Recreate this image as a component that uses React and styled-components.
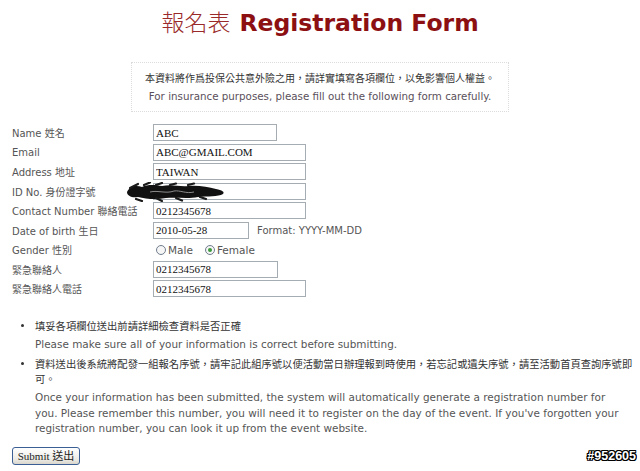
import styled, { createGlobalStyle } from "styled-components";

const GlobalStyle = createGlobalStyle`
    html, body {
        margin: 0;
        padding: 0;
        background: #ffffff;
    }
    body {
        font-family: "DejaVu Sans", Verdana, "Noto Sans CJK TC", sans-serif;
    }
`;

const Page = styled.div`
    position: relative;
    width: 640px;
    height: 471px;
    overflow: hidden;
    background: #fff;
`;

const Title = styled.h1`
    margin: 0;
    padding-top: 4px;
    height: 56px;
    box-sizing: border-box;
    text-align: center;
    font-size: 23.5px;
    line-height: 34px;
    color: #8c0f12;
    white-space: nowrap;
`;

const TitleZh = styled.span`
    font-family: "Noto Sans CJK TC", sans-serif;
    font-weight: 300;
    font-size: 23px;
    color: #9a2a2a;
    margin-right: 9px;
`;

const TitleEn = styled.span`
    font-family: "DejaVu Sans", Verdana, sans-serif;
    font-weight: bold;
`;

const Notice = styled.div`
    width: 378px;
    height: 50px;
    margin: 6px auto 0;
    box-sizing: border-box;
    border: 1px dotted #dcdcdc;
    display: flex;
    flex-direction: column;
    align-items: center;
    padding-top: 7px;
    gap: 4px;
`;

const NoticeZh = styled.div`
    font-family: "Noto Sans CJK TC", sans-serif;
    font-size: 10px;
    line-height: 15px;
    color: #333;
`;

const NoticeEn = styled.div`
    font-size: 10.3px;
    line-height: 15px;
    color: #5a4f5a;
`;

const Form = styled.div`
    margin-top: 11px;
    padding-left: 12px;
`;

const Row = styled.div`
    position: relative;
    display: grid;
    grid-template-columns: 141px auto;
    align-items: center;
    height: 19.5px;
`;

const Label = styled.div`
    font-size: 10px;
    color: #555;
    white-space: nowrap;
`;

const Field = styled.div`
    display: flex;
    align-items: center;
    gap: 8px;
`;

const Input = styled.input`
    width: ${(p) => p.$w}px;
    height: 17px;
    box-sizing: border-box;
    border: 1px solid #a5acb2;
    padding: 0 2px;
    font-family: "Liberation Serif", "Times New Roman", serif;
    font-size: 11px;
    color: #111;
    background: #fff;
    outline: none;
`;

const Hint = styled.span`
    font-size: 10px;
    color: #555;
`;

const RadioGroup = styled.div`
    display: flex;
    align-items: center;
    gap: 12px;
    padding-left: 3px;
`;

const RadioLabel = styled.label`
    display: flex;
    align-items: center;
    gap: 2px;
    font-size: 10.5px;
    color: #555;
`;

const Radio = styled.span`
    position: relative;
    width: 10px;
    height: 10px;
    box-sizing: border-box;
    border: 1px solid #6f7d8c;
    border-radius: 50%;
    background: #f6f6f6;

    &::after {
        content: "";
        display: ${(p) => (p.$checked ? "block" : "none")};
        position: absolute;
        left: 2px;
        top: 2px;
        width: 4px;
        height: 4px;
        border-radius: 50%;
        background: #3d9a3d;
    }
`;

const Scribble = styled.svg`
    position: absolute;
    left: 114px;
    top: 0;
`;

const List = styled.ul`
    margin: 19px 0 0;
    padding: 0 0 0 35px;
    list-style: none;
`;

const Item = styled.li`
    position: relative;
    margin-bottom: 4px;

    &::before {
        content: "";
        position: absolute;
        left: -14px;
        top: 6px;
        width: 3px;
        height: 3px;
        border-radius: 50%;
        background: #333;
    }
`;

const ItemZh = styled.div`
    font-family: "Noto Sans CJK TC", sans-serif;
    font-size: 10.3px;
    line-height: 15px;
    color: #333;
    white-space: nowrap;
`;

const ItemEn = styled.div`
    margin-top: 4px;
    font-size: 10.45px;
    line-height: 15.5px;
    color: #555;
    white-space: nowrap;
`;

const Submit = styled.button`
    margin: 6px 0 0 12px;
    width: 68px;
    height: 18px;
    box-sizing: border-box;
    border: 1px solid #3b5f95;
    border-radius: 3px;
    background: linear-gradient(#ffffff, #ecebe6 70%, #d8d6cc);
    font-family: "Liberation Serif", "Noto Sans CJK TC", serif;
    font-weight: normal;
    font-size: 11px;
    color: #222;
    padding: 0;
    line-height: 16px;
`;

const Watermark = styled.div`
    position: absolute;
    right: 4px;
    bottom: 8px;
    font-family: "Liberation Sans", Arial, sans-serif;
    font-weight: bold;
    font-size: 12.5px;
    color: #fff;
    text-shadow:
        1px 0 0 #000, -1px 0 0 #000, 0 1px 0 #000, 0 -1px 0 #000,
        1px 1px 0 #000, -1px -1px 0 #000, 1px -1px 0 #000, -1px 1px 0 #000;
`;

const rows = [
    { label: "Name 姓名", value: "ABC", w: 124 },
    { label: "Email", value: "ABC@GMAIL.COM", w: 153 },
    { label: "Address 地址", value: "TAIWAN", w: 153 },
    { label: "ID No. 身份證字號", value: "", w: 153, hidden: true },
    { label: "Contact Number 聯絡電話", value: "0212345678", w: 153 },
    { label: "Date of birth 生日", value: "2010-05-28", w: 96, hint: "Format: YYYY-MM-DD" },
    { label: "Gender 性別", gender: true },
    { label: "緊急聯絡人", value: "0212345678", w: 125 },
    { label: "緊急聯絡人電話", value: "0212345678", w: 153 },
];

const App = () => {
    return (
        <Page>
            <GlobalStyle />
            <Title>
                <TitleZh>報名表</TitleZh>
                <TitleEn>Registration Form</TitleEn>
            </Title>

            <Notice>
                <NoticeZh>本資料將作爲投保公共意外險之用，請詳實填寫各項欄位，以免影響個人權益。</NoticeZh>
                <NoticeEn>For insurance purposes, please fill out the following form carefully.</NoticeEn>
            </Notice>

            <Form>
                {rows.map((r) => (
                    <Row key={r.label}>
                        <Label>{r.label}</Label>
                        {r.gender ? (
                            <RadioGroup>
                                <RadioLabel>
                                    <Radio />
                                    Male
                                </RadioLabel>
                                <RadioLabel>
                                    <Radio $checked />
                                    Female
                                </RadioLabel>
                            </RadioGroup>
                        ) : (
                            <Field>
                                <Input $w={r.w} defaultValue={r.value} readOnly />
                                {r.hint && <Hint>{r.hint}</Hint>}
                            </Field>
                        )}
                        {r.hidden && (
                            <Scribble width="100" height="20" viewBox="0 0 100 20">
                                <path
                                    d="M1 10 C4 4 10 3 16 5 C22 2 30 3 36 4 C46 2 54 5 62 4 C72 3 82 5 90 7 C96 8 99 10 97 12 C92 15 82 14 72 15 C62 17 50 15 40 16 C30 18 20 17 12 15 C6 16 1 14 1 10 Z"
                                    fill="#111"
                                />
                                <path
                                    d="M4 6 L12 2 M18 3 L24 0.5 M30 3 L36 1 M44 3 L50 1.5 M62 3 L68 1.5 M10 17 L16 19 M30 16 L36 19 M50 16 L56 18.5 M74 15 L80 17"
                                    stroke="#1a1a1a"
                                    strokeWidth="2.2"
                                    strokeLinecap="round"
                                />
                                <path
                                    d="M24 10 C32 8 40 12 48 9 C54 8 60 12 68 10"
                                    stroke="#8a8a8a"
                                    strokeWidth="1"
                                    fill="none"
                                />
                            </Scribble>
                        )}
                    </Row>
                ))}
            </Form>

            <List>
                <Item>
                    <ItemZh>填妥各項欄位送出前請詳細檢查資料是否正確</ItemZh>
                    <ItemEn>Please make sure all of your information is correct before submitting.</ItemEn>
                </Item>
                <Item>
                    <ItemZh>
                        資料送出後系統將配發一組報名序號，請牢記此組序號以便活動當日辦理報到時使用，若忘記或遺失序號，請至活動首頁查詢序號即
                        <br />
                        可。
                    </ItemZh>
                    <ItemEn>
                        Once your information has been submitted, the system will automatically generate a registration number for
                        <br />
                        you. Please remember this number, you will need it to register on the day of the event. If you've forgotten your
                        <br />
                        registration number, you can look it up from the event website.
                    </ItemEn>
                </Item>
            </List>

            <Submit>Submit 送出</Submit>

            <Watermark>#952605</Watermark>
        </Page>
    );
};

export default App;
